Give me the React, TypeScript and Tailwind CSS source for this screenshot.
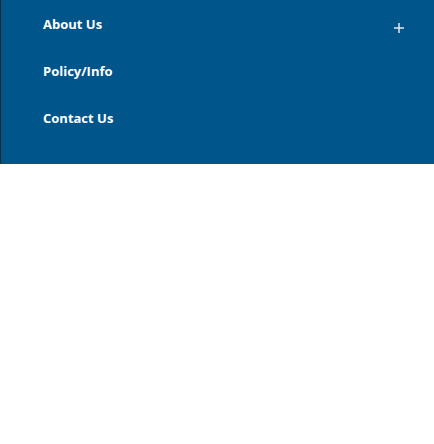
import React from 'react';

const items = ['About Us', 'Policy/Info', 'Contact Us'];

export default function App() {
  return (
    <div className="w-[434px] h-[444px] bg-white" style={{ fontFamily: '"Open Sans", sans-serif' }}>
      <nav className="bg-[#00558b] border-l border-[#2a2a2a] pt-[1px] pb-[22px]">
        <ul>
          {items.map((label, i) => (
            <li key={label} className="h-[47px] flex items-center justify-between pl-[42px] pr-[30px]">
              <span className="text-[13px] font-bold text-white">{label}</span>
              {i === 0 && (
                <svg width="10" height="10" viewBox="0 0 10 10" className="mt-[7px]" aria-hidden>
                  <path d="M5 0v10M0 5h10" stroke="#dfe9f1" strokeWidth="1.5" />
                </svg>
              )}
            </li>
          ))}
        </ul>
      </nav>
    </div>
  );
}
